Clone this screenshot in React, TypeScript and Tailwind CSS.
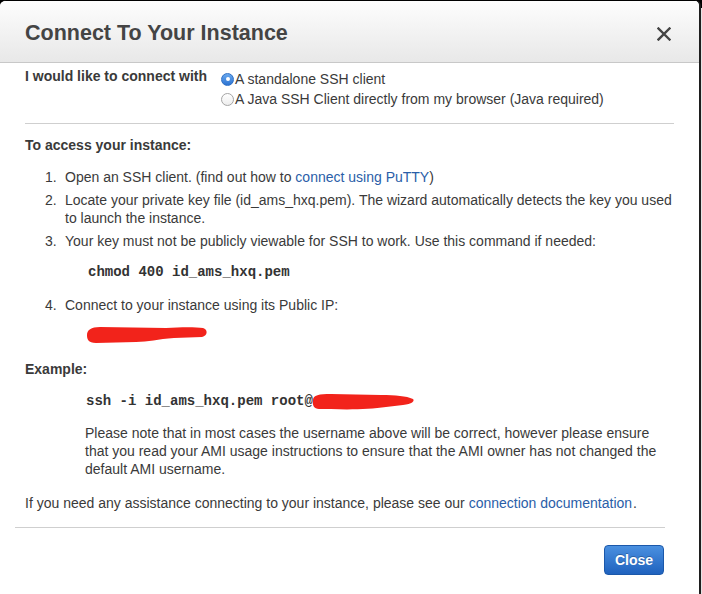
import React from "react";

function Radio({ checked }: { checked?: boolean }) {
  if (checked) {
    return (
      <span className="w-[13px] h-[13px] rounded-full shrink-0 border border-[#2f6fc4] bg-linear-to-b from-[#6aa9ef] to-[#2b73d2] flex items-center justify-center">
        <span className="w-[4px] h-[4px] rounded-full bg-white" />
      </span>
    );
  }
  return (
    <span className="w-[13px] h-[13px] rounded-full shrink-0 border border-[#a5a5a5] bg-linear-to-b from-[#ffffff] to-[#ededed]" />
  );
}

function Item({ n, children, className = "" }: { n: string; children: React.ReactNode; className?: string }) {
  return (
    <li className={"flex " + className}>
      <span className="w-[20px] shrink-0">{n}</span>
      <div>{children}</div>
    </li>
  );
}

export default function App() {
  return (
    <div className="w-[702px] h-[594px] flex bg-[linear-gradient(to_bottom,#000_0px,#000_8px,#e4e4e4_8px)] font-['Liberation_Sans',Arial,sans-serif] text-[14px] leading-[18px] text-[#3a3a3a]">
      <div className="w-[701px] h-full bg-white border-t border-t-black border-r-2 border-r-[#1e1e1e] rounded-t-[6px] overflow-hidden flex flex-col">
        <header className="h-[62px] shrink-0 border-b border-[#c8c8c8] bg-linear-to-b from-[#fdfdfd] to-[#e8e8e8] flex items-center justify-between pl-[25px] pr-[28px]">
          <h1 className="text-[21.5px] leading-[24px] font-bold text-[#444] mt-[2px]">Connect To Your Instance</h1>
          <svg width="14" height="14" viewBox="0 0 14 14" className="mt-[4px]">
            <path d="M1.5 1.5 L12.5 12.5 M12.5 1.5 L1.5 12.5" stroke="#444" strokeWidth="2.4" strokeLinecap="square" />
          </svg>
        </header>

        <div className="px-[25px] pt-[4px]">
          <div className="flex">
            <div className="w-[196px] shrink-0 font-bold">I would like to connect with</div>
            <div className="mt-[2px] flex flex-col">
              <label className="h-[20px] flex items-center gap-[1px]">
                <Radio checked />
                <span>A standalone SSH client</span>
              </label>
              <label className="h-[20px] flex items-center gap-[1px]">
                <Radio />
                <span>A Java SSH Client directly from my browser (Java required)</span>
              </label>
            </div>
          </div>

          <div className="mt-[14px] h-px bg-[#cfcfcf]" />

          <div className="mt-[12px] font-bold">To access your instance:</div>

          <ol className="mt-[14px] pl-[20px] flex flex-col">
            <Item n="1.">
              Open an SSH client. (find out how to{" "}
              <a className="text-[#2a5ea8]">connect using PuTTY</a>)
            </Item>
            <Item n="2." className="mt-[5px]">
              Locate your private key file (id_ams_hxq.pem). The wizard automatically detects the key you used
              <br />
              to launch the instance.
            </Item>
            <Item n="3." className="mt-[5px]">
              Your key must not be publicly viewable for SSH to work. Use this command if needed:
            </Item>
            <li className="mt-[13px] ml-[43px] font-['Liberation_Mono',monospace] font-bold text-[#333]">
              chmod 400 id_ams_hxq.pem
            </li>
            <Item n="4." className="mt-[15px]">
              Connect to your instance using its Public IP:
            </Item>
          </ol>

          <svg width="122" height="18" viewBox="0 0 122 18" className="mt-[12px] ml-[61px] block">
            <path
              d="M1 9 C1 4, 5 1, 14 1 L80 2 C95 1, 110 1, 117 2 C122 3, 122 10, 116 11 L88 12 C72 13, 62 16, 50 16 L10 17 C2 17, 1 13, 1 9 Z"
              fill="#f2231b"
            />
          </svg>

          <div className="mt-[16px] font-bold">Example:</div>

          <div className="mt-[14px] ml-[61px] flex items-center h-[18px] font-['Liberation_Mono',monospace] font-bold text-[#333]">
            <span>ssh -i id_ams_hxq.pem root@</span>
            <svg width="104" height="18" viewBox="0 0 104 18" className="-ml-[2px] mt-[2px]">
              <path
                d="M2 7 C2 2, 8 1, 20 1 L70 2 C85 2, 95 3, 102 6 C104 8, 101 11, 92 12 L75 14 C60 16, 40 17, 20 16 L8 16 C3 16, 1 12, 2 7 Z"
                fill="#f2231b"
              />
            </svg>
          </div>

          <p className="mt-[14px] ml-[60px]">
            Please note that in most cases the username above will be correct, however please ensure
            <br />
            that you read your AMI usage instructions to ensure that the AMI owner has not changed the
            <br />
            default AMI username.
          </p>

          <p className="mt-[16px]">
            If you need any assistance connecting to your instance, please see our{" "}
            <a className="text-[#2a5ea8] mr-[1px]">connection documentation</a>.
          </p>
        </div>

        <div className="mt-[15px] ml-[15px] w-[650px] h-px bg-[#cfcfcf]" />

        <div className="mt-[17px] flex justify-end pr-[35px]">
          <button className="w-[60px] h-[30px] rounded-[4px] border border-[#1b58aa] bg-linear-to-b from-[#4a90e0] to-[#1f62be] text-white font-bold text-[14px] [text-shadow:0_-1px_0_rgba(0,0,0,0.25)]">
            Close
          </button>
        </div>
      </div>
    </div>
  );
}
